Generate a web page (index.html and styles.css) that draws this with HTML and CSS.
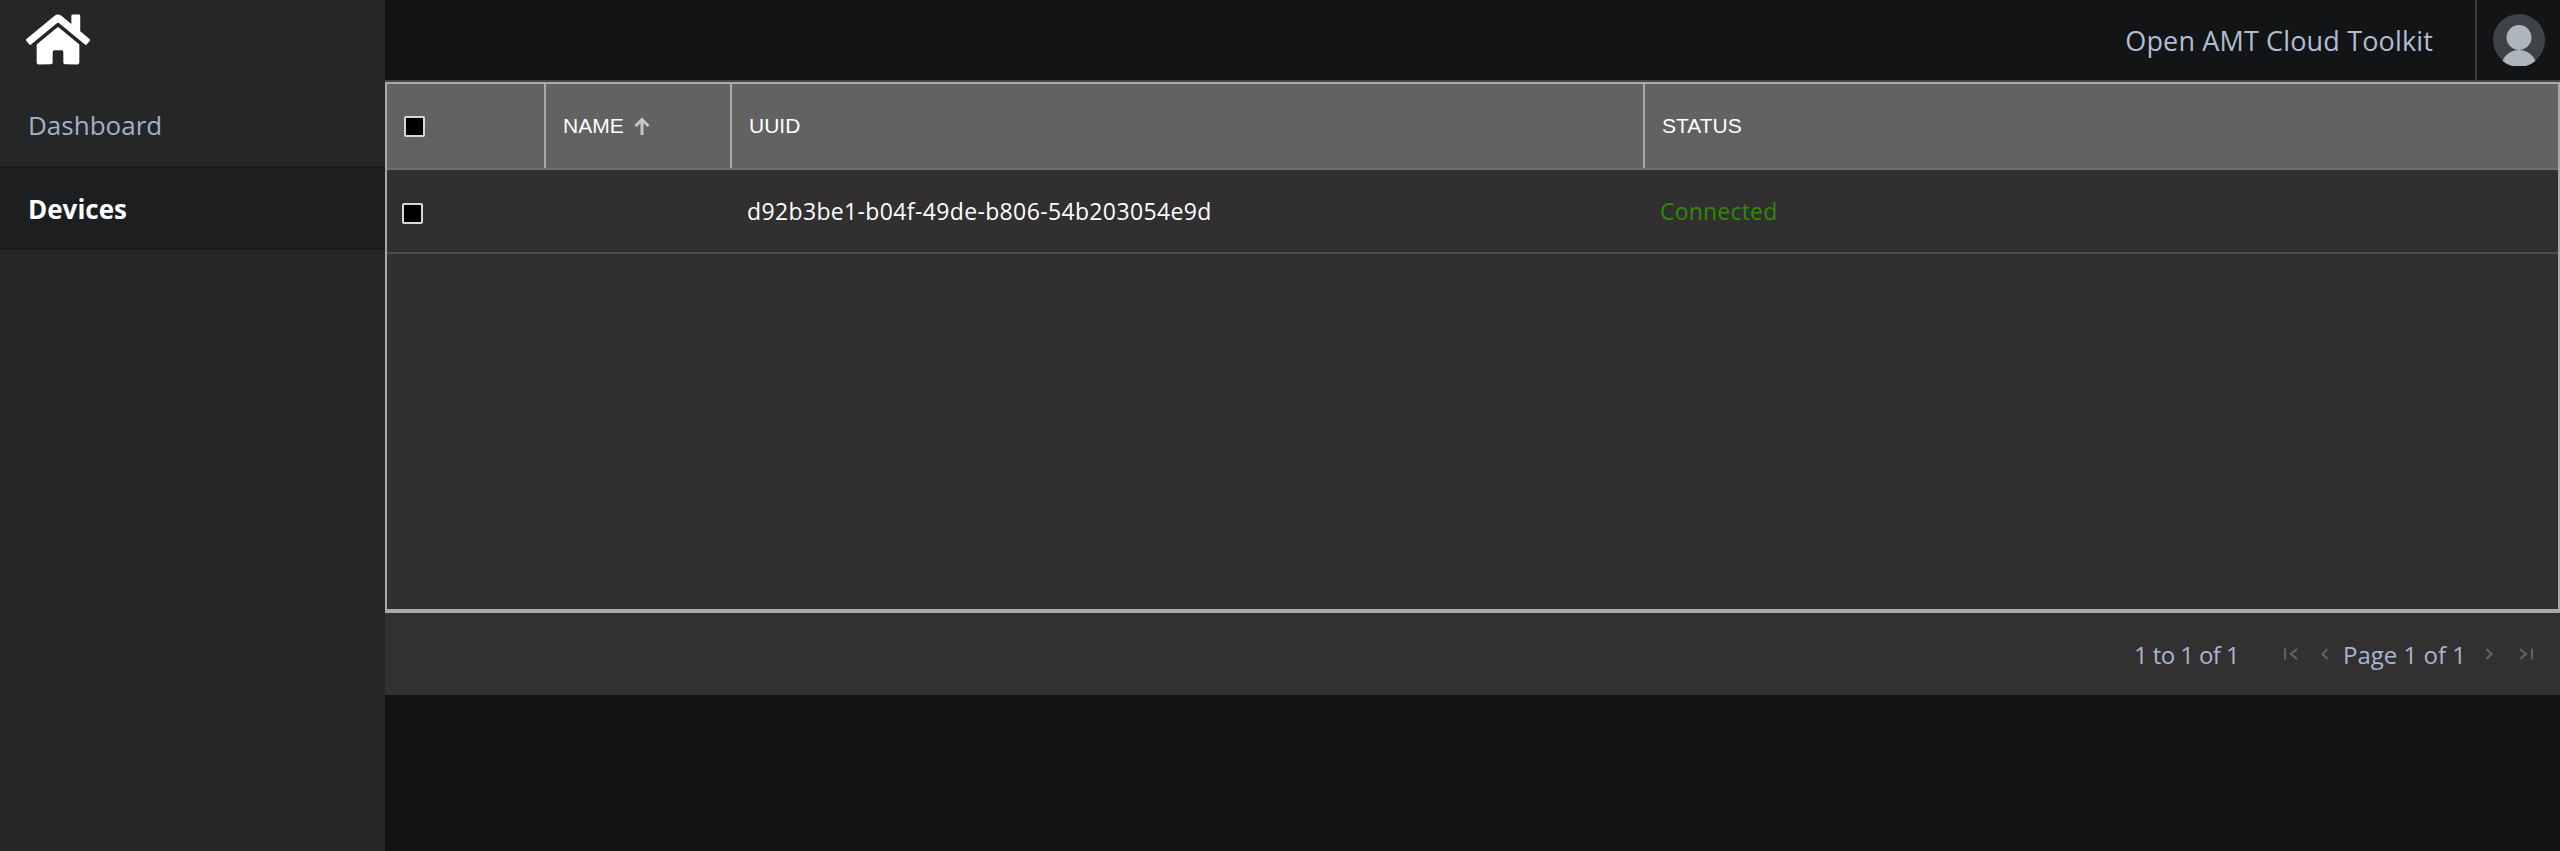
FILE: index.html
```html
<!DOCTYPE html>
<html lang="en">
<head>
    <meta charset="UTF-8">
    <meta name="viewport" content="width=device-width, initial-scale=1.0">
    <title>Open AMT Cloud Toolkit</title>
    <link rel="stylesheet" href="styles.css">
</head>
<body>
    <aside class="sidebar">
        <div class="logo">
            <svg class="logo-icon" viewBox="0 0 576 512"><path fill="#fff" d="M280.37 148.26L96 300.11V464a16 16 0 0 0 16 16l112.06-.29a16 16 0 0 0 15.92-16V368a16 16 0 0 1 16-16h64a16 16 0 0 1 16 16v95.64a16 16 0 0 0 16 16.05L464 480a16 16 0 0 0 16-16V300L295.67 148.26a12.19 12.19 0 0 0-15.3 0zM571.6 251.47L488 182.56V44.05a12 12 0 0 0-12-12h-56a12 12 0 0 0-12 12v72.61L318.47 43a48 48 0 0 0-61 0L4.34 251.47a12 12 0 0 0-1.6 16.9l25.5 31A12 12 0 0 0 45.15 301l235.22-193.74a12.19 12.19 0 0 1 15.3 0L530.9 301a12 12 0 0 0 16.9-1.6l25.5-31a12 12 0 0 0-1.7-17.93z"/></svg>
        </div>
        <a class="nav-item">Dashboard</a>
        <a class="nav-item active">Devices</a>
    </aside>
    <div class="main">
        <header class="topbar">
            <span class="brand">Open AMT Cloud Toolkit</span>
            <div class="user">
                <svg class="avatar" viewBox="0 0 52 52">
                    <circle cx="26" cy="26" r="26" fill="#3f4246"/>
                    <circle cx="26" cy="23.500" r="12.500" fill="#adb5bd"/>
                    <path fill="#adb5bd" d="M9.500 47c3-7 9-11 16.500-11s13.500 4 16.500 11a26 26 0 0 1-33 0z"/>
                </svg>
            </div>
        </header>
        <section class="grid">
            <div class="grid-table">
                <div class="row head-row">
                    <div class="cell head-cell"><span class="checkbox"></span></div>
                    <div class="cell head-cell name-head">NAME
                        <svg class="sort-icon" viewBox="0 0 16 18"><path fill="none" stroke="#c8c8c8" stroke-width="3" d="M8 18V3M1.500 9 8 2.500 14.500 9"/></svg>
                    </div>
                    <div class="cell head-cell">UUID</div>
                    <div class="cell head-cell last">STATUS</div>
                </div>
                <div class="row body-row">
                    <div class="cell"><span class="checkbox row-check"></span></div>
                    <div class="cell"></div>
                    <div class="cell uuid">d92b3be1-b04f-49de-b806-54b203054e9d</div>
                    <div class="cell connected">Connected</div>
                </div>
            </div>
            <footer class="pager">
                <span class="summary">1 to 1 of 1</span>
                <svg class="pg-icon" viewBox="0 0 14 14"><path d="M1 1.500v11M13 2 7 7l6 5"/></svg>
                <svg class="pg-icon prev" viewBox="0 0 14 14"><path d="M9.500 2 4.500 7l5 5"/></svg>
                <span class="page-text">Page 1 of 1</span>
                <svg class="pg-icon" viewBox="0 0 14 14"><path d="M4.500 2l5 5-5 5"/></svg>
                <svg class="pg-icon last-page" viewBox="0 0 14 14"><path d="M1 2l6 5-6 5M13 1.500v11"/></svg>
            </footer>
        </section>
    </div>
</body>
</html>
```
FILE: styles.css
```css
* {
    box-sizing: border-box;
}
body {
    margin: 0;
    height: 851px;
    display: flex;
    overflow: hidden;
    background-color: #131416;
    font-family: "Open Sans", "Noto Sans", sans-serif;
}
.sidebar {
    width: 385px;
    flex-shrink: 0;
    background-color: #252628;
}
.logo {
    height: 82px;
    padding: 11px 0 0 26px;
}
.logo-icon {
    display: block;
    width: 64px;
    height: 57px;
}
.nav-item {
    display: flex;
    align-items: center;
    height: 84px;
    padding: 2px 0 0 28px;
    font-size: 26px;
    color: #a2b1c6;
}
.nav-item.active {
    background-color: #1d1e20;
    color: #fff;
    font-weight: 700;
}
.main {
    flex: 1;
    min-width: 0;
}
.topbar {
    display: flex;
    justify-content: flex-end;
    align-items: center;
    height: 82px;
    border-bottom: 2px solid #444548;
}
.brand {
    font-size: 27px;
    letter-spacing: 0.15px;
    color: #b0bdd0;
    margin-right: 42px;
}
.user {
    display: flex;
    align-items: center;
    height: 80px;
    width: 85px;
    padding-left: 16px;
    border-left: 2px solid #3a3b3e;
}
.avatar {
    width: 52px;
    height: 52px;
}
.grid {
    background-color: #323031;
}
.grid-table {
    height: 531px;
    border: 2px solid #a9a9a9;
    border-bottom-width: 4px;
    background-color: #312f30;
}
.row {
    display: grid;
    grid-template-columns: 159px 186px 913px 1fr;
}
.head-row {
    height: 86px;
    background-color: #626262;
    border-bottom: 2px solid #6e6e6e;
}
.body-row {
    height: 84px;
    border-bottom: 2px solid #4c4b4c;
}
.cell {
    display: flex;
    align-items: center;
    padding-left: 15px;
    font-size: 23px;
    color: #fff;
}
.head-cell {
    font-family: "Liberation Sans", Arial, sans-serif;
    font-size: 21px;
    padding-left: 17px;
    border-right: 2px solid #a9a9a9;
}
.head-cell.last {
    border-right: 0;
}
.uuid {
    letter-spacing: 0.36px;
}
.connected {
    color: #2e8a0a;
    letter-spacing: 0.2px;
}
.checkbox {
    display: block;
    width: 21px;
    height: 21px;
    background-color: #000;
    border: 2px solid #d5d9de;
    border-radius: 2px;
}
.row-check {
    margin-top: 5px;
}
.sort-icon {
    width: 16px;
    height: 18px;
    margin-left: 10px;
}
.pager {
    display: flex;
    justify-content: flex-end;
    align-items: center;
    height: 82px;
    padding-right: 27px;
    font-size: 24px;
    color: #a8b7cd;
}
.summary {
    letter-spacing: -0.6px;
    margin-right: 45px;
}
.pg-icon {
    width: 14px;
    height: 14px;
    fill: none;
    stroke: #606163;
    stroke-width: 2.2;
}
.prev {
    margin-left: 20px;
}
.page-text {
    margin: 0 16px 0 11px;
}
.last-page {
    margin-left: 23px;
}
```
